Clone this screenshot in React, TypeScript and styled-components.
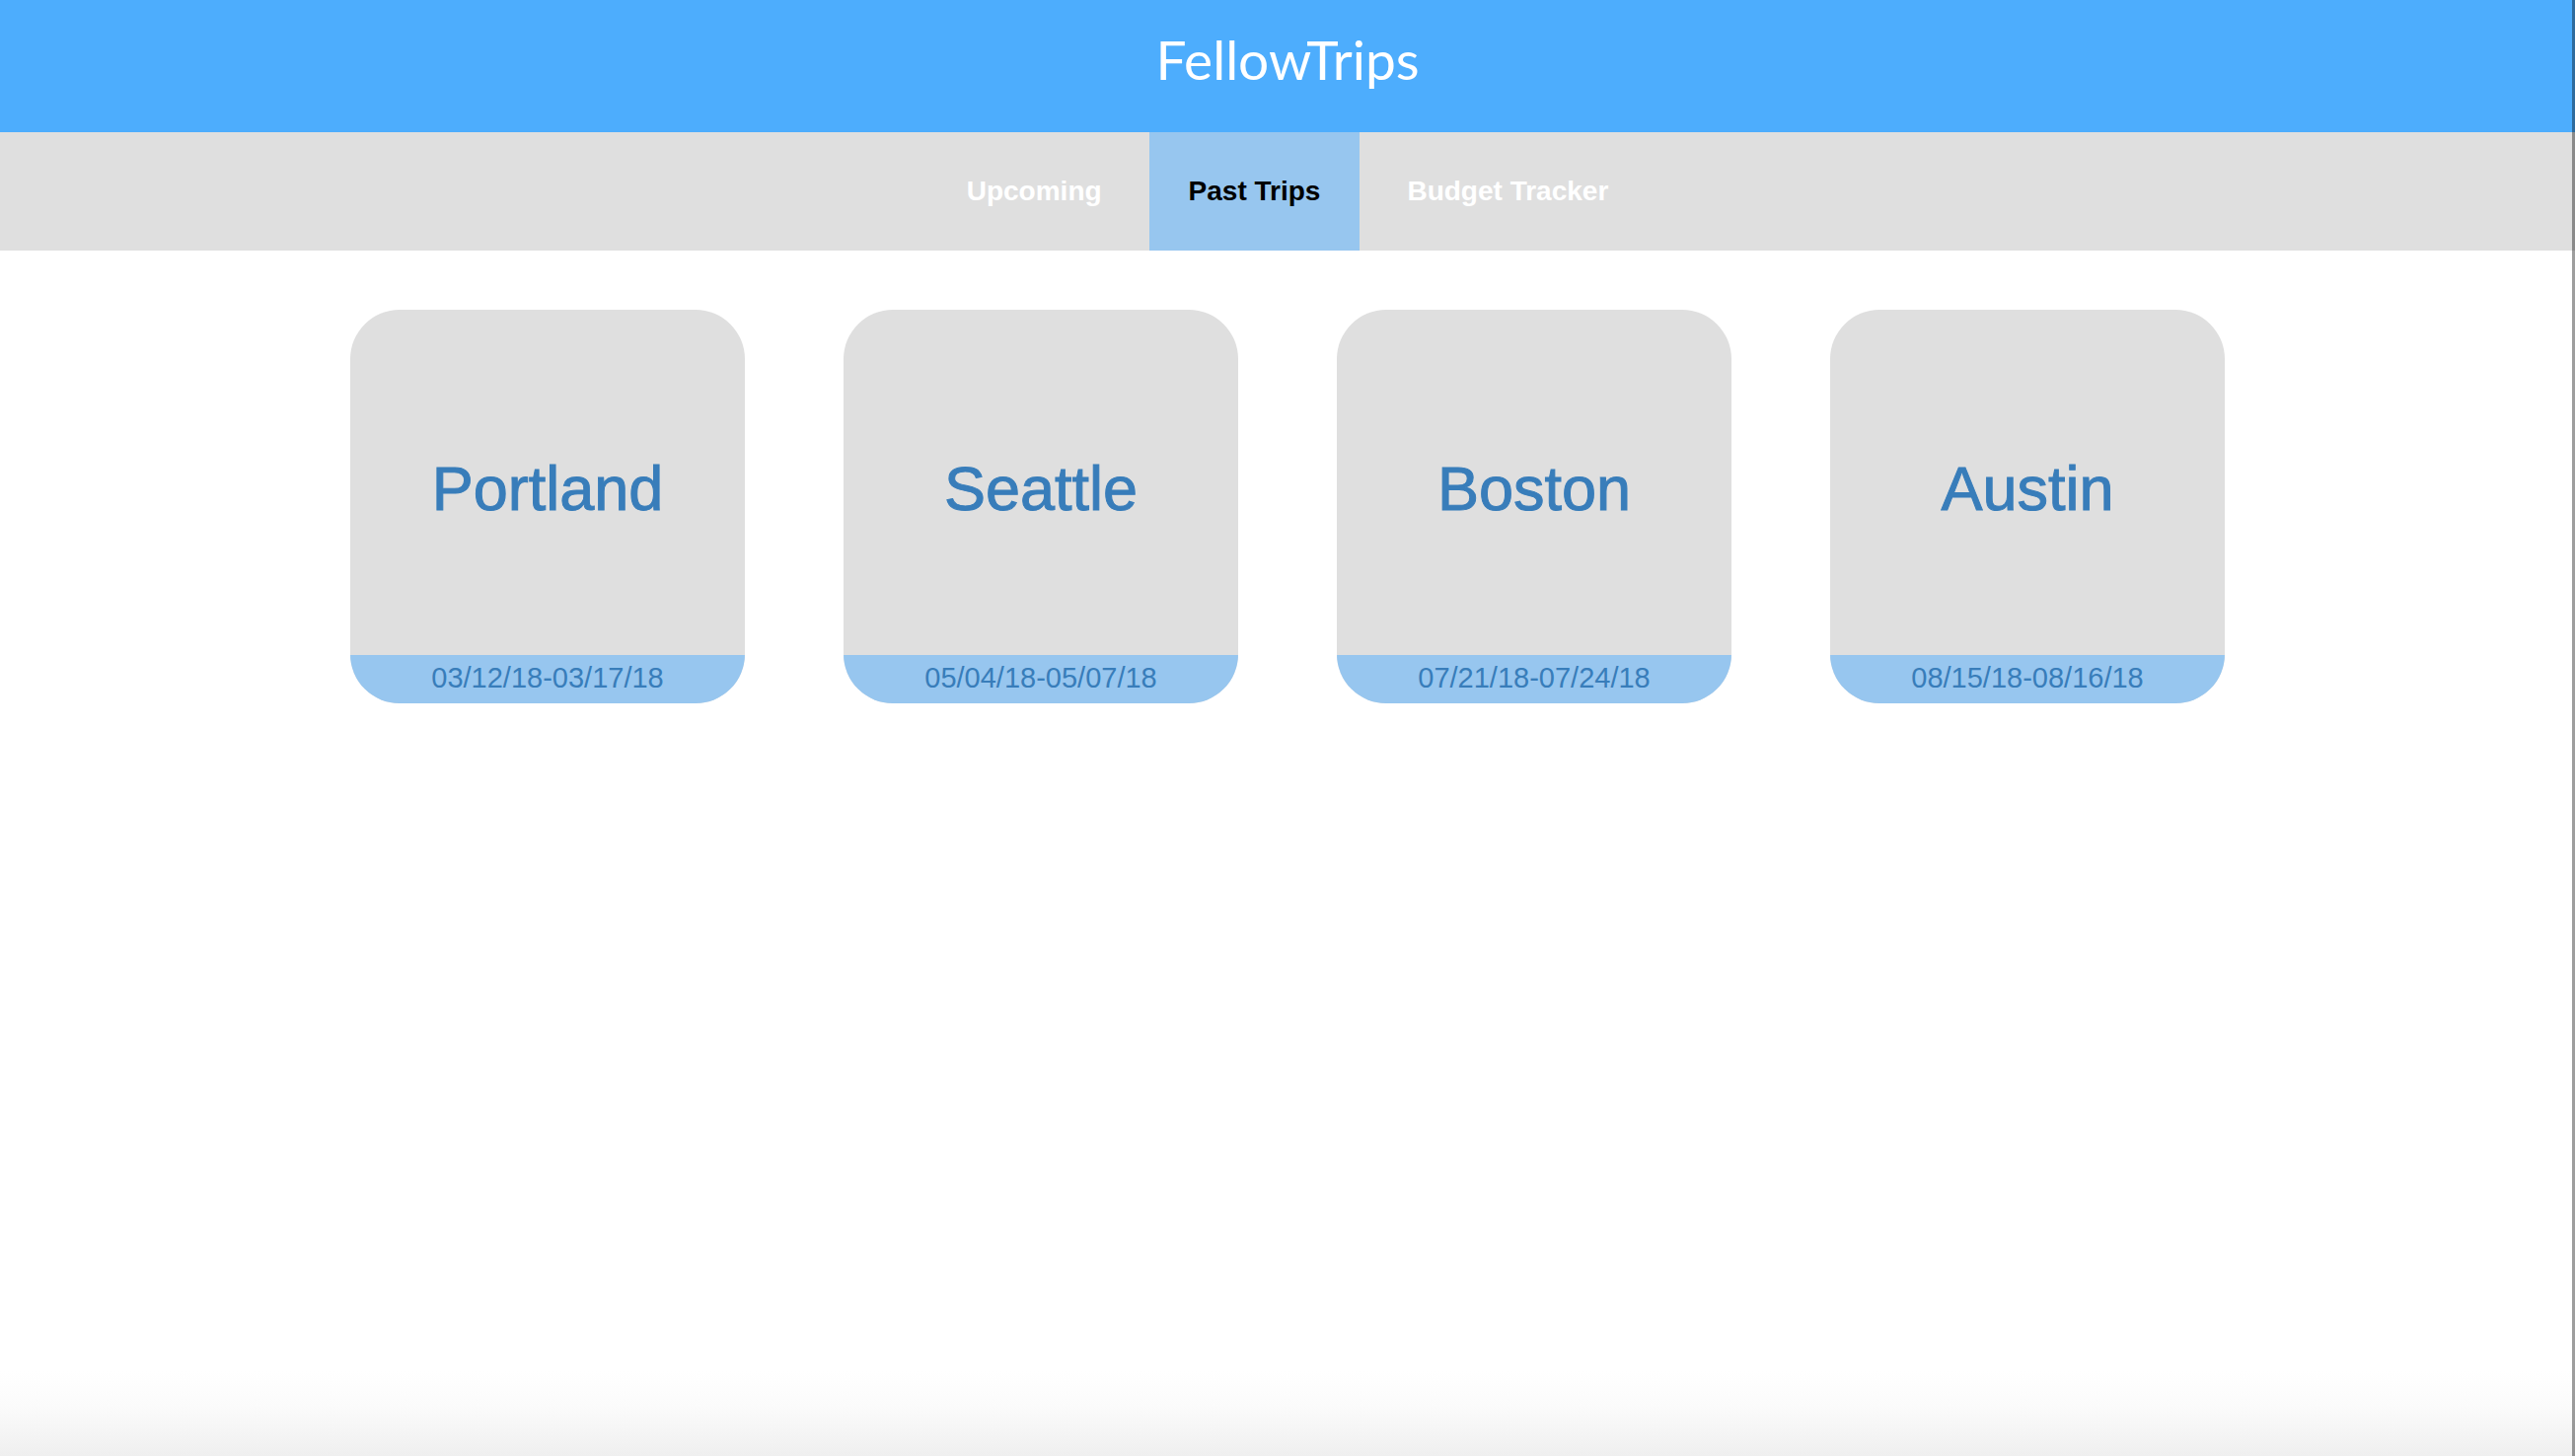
import React from "react";
import styled, { createGlobalStyle } from "styled-components";

const GlobalStyle = createGlobalStyle`
  html, body {
    margin: 0;
    padding: 0;
  }
  body {
    font-family: "Liberation Sans", Arial, sans-serif;
    background: #ffffff;
  }
`;

const Page = styled.div`
  min-height: 100vh;
  display: flex;
  flex-direction: column;
  background: linear-gradient(
    to bottom,
    #ffffff 0,
    #ffffff calc(100% - 86px),
    #fbfbfb calc(100% - 50px),
    #efefef 100%
  );
  &::after {
    content: "";
    position: fixed;
    top: 0;
    right: 0;
    width: 3px;
    height: 100%;
    background: rgba(0, 0, 0, 0.38);
  }
`;

const Header = styled.header`
  height: 134px;
  background: #4dadfd;
  display: flex;
  align-items: center;
  justify-content: center;
`;

const Title = styled.h1`
  margin: 0 0 14px;
  font-family: Lato, "Open Sans", sans-serif;
  font-weight: 400;
  font-size: 55px;
  color: #ffffff;
`;

const Nav = styled.nav`
  height: 120px;
  background: #dfdfdf;
  display: flex;
  justify-content: center;
  align-items: stretch;
  gap: 8px;
`;

const Tab = styled.a<{ $active?: boolean }>`
  display: flex;
  align-items: center;
  padding: 0 40px;
  font-family: "Liberation Sans", Arial, sans-serif;
  font-weight: 700;
  font-size: 28px;
  text-decoration: none;
  color: ${(p) => (p.$active ? "#000000" : "#ffffff")};
  background: ${(p) => (p.$active ? "#97c6ef" : "transparent")};
`;

const Grid = styled.main`
  display: flex;
  justify-content: center;
  gap: 100px;
  padding-top: 60px;
`;

const Card = styled.div`
  width: 400px;
  height: 399px;
  border-radius: 50px;
  overflow: hidden;
  background: #dfdfdf;
  display: flex;
  flex-direction: column;
`;

const CardBody = styled.div`
  flex: 1;
  display: flex;
  align-items: center;
  justify-content: center;
  padding-top: 12px;
`;

const City = styled.h2`
  margin: 0;
  font-family: "Liberation Sans", Arial, sans-serif;
  font-weight: 400;
  font-size: 63px;
  color: #387dba;
  -webkit-text-stroke: 1px #387dba;
`;

const DateBand = styled.div`
  height: 49px;
  padding-bottom: 3px;
  box-sizing: border-box;
  background: #97c6ef;
  display: flex;
  align-items: center;
  justify-content: center;
  font-family: "Liberation Sans", Arial, sans-serif;
  font-size: 29px;
  color: #387dba;
`;

const trips = [
  { city: "Portland", dates: "03/12/18-03/17/18" },
  { city: "Seattle", dates: "05/04/18-05/07/18" },
  { city: "Boston", dates: "07/21/18-07/24/18" },
  { city: "Austin", dates: "08/15/18-08/16/18" },
];

export default function App() {
  return (
    <Page>
      <GlobalStyle />
      <Header>
        <Title>FellowTrips</Title>
      </Header>
      <Nav>
        <Tab href="#">Upcoming</Tab>
        <Tab href="#" $active>
          Past Trips
        </Tab>
        <Tab href="#">Budget Tracker</Tab>
      </Nav>
      <Grid>
        {trips.map((t) => (
          <Card key={t.city}>
            <CardBody>
              <City>{t.city}</City>
            </CardBody>
            <DateBand>{t.dates}</DateBand>
          </Card>
        ))}
      </Grid>
    </Page>
  );
}
